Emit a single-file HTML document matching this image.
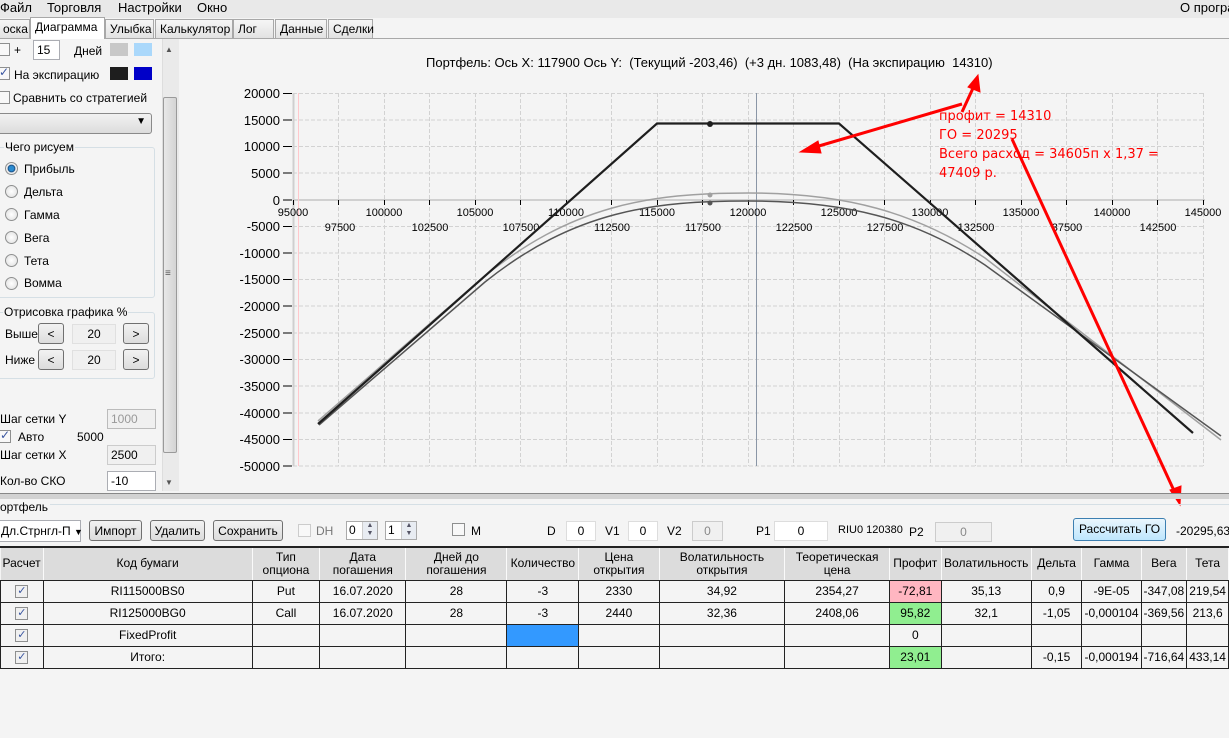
<!DOCTYPE html>
<html><head><meta charset="utf-8">
<style>
*{box-sizing:border-box;margin:0;padding:0}
body{width:1229px;height:738px;overflow:hidden;background:#f4f4f4;font-family:"Liberation Sans","DejaVu Sans",sans-serif;font-size:12px;color:#000;position:relative}
.a{position:absolute;white-space:nowrap}
.menu{left:0;top:0;width:1229px;height:18px;background:#e9e9e9;font-size:13px}
.tab{top:19px;height:19px;border:1px solid #a8a8a8;border-bottom:none;background:linear-gradient(#f6f6f6,#e2e2e2);font-size:12px;padding:2px 4px}
.tab.sel{background:#fff;top:17px;height:22px}
.cb{width:13px;height:13px;border:1px solid #8e8f8f;background:#f8f8f8}
.cbk::after{content:"✓";position:absolute;left:1px;top:-3px;font-size:12px;color:#3a56a0}
.inp{border:1px solid #abadb3;background:#fff;height:20px;padding:2px 3px}
.dis{background:#f0f0f0;color:#888;border-color:#ccc}
.btn{border:1px solid #707070;border-radius:3px;background:linear-gradient(#f2f2f2,#dcdcdc);text-align:center;height:21px;padding-top:3px}
.rad{width:13px;height:13px;border-radius:50%;border:1px solid #8e8f8f;background:radial-gradient(#fff,#ddd)}
.grp{border:1px solid #d5dfe5;border-radius:3px}
table{border-collapse:collapse;position:absolute;left:0;top:548px;font-size:12px;table-layout:fixed}
td{border:1px solid #222;border-top:1px solid #111;text-align:center;height:22px;background:#f4f4f4;padding:0 2px;overflow:hidden;white-space:nowrap}
th{font-weight:normal;background:#dcdcdc;border-right:1px solid #fafafa;border-bottom:1px solid #222;height:32px;line-height:13px;padding:0 2px}
.tk{display:inline-block;width:13px;height:13px;border:1px solid #8e8f8f;background:#f0f0f0;color:#3a56a0;font-size:11px;line-height:11px;vertical-align:middle}
</style></head><body>
<div class="a menu"><span class="a" style="left:0;top:0">Файл</span><span class="a" style="left:47px;top:0">Торговля</span><span class="a" style="left:118px;top:0">Настройки</span><span class="a" style="left:197px;top:0">Окно</span><span class="a" style="left:1180px;top:0">О програ</span></div>
<div class="a" style="left:0;top:38px;width:1229px;height:1px;background:#a8a8a8"></div>
<div class="a tab" style="left:-2px;width:32px">оска</div>
<div class="a tab" style="left:105px;width:49px">Улыбка</div>
<div class="a tab" style="left:155px;width:78px">Калькулятор</div>
<div class="a tab" style="left:233px;width:41px">Лог</div>
<div class="a tab" style="left:275px;width:52px">Данные</div>
<div class="a tab" style="left:328px;width:45px">Сделки</div>
<div class="a tab sel" style="left:30px;width:75px">Диаграмма</div>

<div class="a cb" style="left:-3px;top:43px"></div>
<div class="a" style="left:14px;top:43px">+</div>
<div class="a inp" style="left:33px;top:40px;width:27px;background:#fff">15</div>
<div class="a" style="left:74px;top:44px">Дней</div>
<div class="a" style="left:110px;top:43px;width:18px;height:13px;background:#c8c8c8"></div>
<div class="a" style="left:134px;top:43px;width:18px;height:13px;background:#aad8fb"></div>
<div class="a cb cbk" style="left:-3px;top:67px"></div>
<div class="a" style="left:14px;top:68px">На экспирацию</div>
<div class="a" style="left:110px;top:67px;width:18px;height:13px;background:#1e1e1e"></div>
<div class="a" style="left:134px;top:67px;width:18px;height:13px;background:#0000c8"></div>
<div class="a cb" style="left:-3px;top:91px"></div>
<div class="a" style="left:13px;top:91px">Сравнить со стратегией</div>
<div class="a" style="left:-3px;top:113px;width:155px;height:21px;border:1px solid #8a8a8a;border-radius:3px;background:linear-gradient(#f2f2f2,#dcdcdc)"><span class="a" style="right:5px;top:2px;font-size:10px">▼</span></div>
<div class="a grp" style="left:-3px;top:147px;width:158px;height:151px"></div>
<div class="a" style="left:4px;top:140px;background:#f4f4f4;padding:0 1px">Чего рисуем</div>
<div class="a rad" style="left:5px;top:162px;background:radial-gradient(#2a8bd0 30%,#184a80 45%,#eee 55%)"></div><div class="a" style="left:24px;top:162px">Прибыль</div>
<div class="a rad" style="left:5px;top:185px"></div><div class="a" style="left:24px;top:185px">Дельта</div>
<div class="a rad" style="left:5px;top:208px"></div><div class="a" style="left:24px;top:208px">Гамма</div>
<div class="a rad" style="left:5px;top:231px"></div><div class="a" style="left:24px;top:231px">Вега</div>
<div class="a rad" style="left:5px;top:254px"></div><div class="a" style="left:24px;top:254px">Тета</div>
<div class="a rad" style="left:5px;top:277px"></div><div class="a" style="left:24px;top:276px">Вомма</div>
<div class="a grp" style="left:-3px;top:312px;width:158px;height:67px"></div>
<div class="a" style="left:3px;top:305px;background:#f4f4f4;padding:0 1px">Отрисовка графика %</div>
<div class="a" style="left:5px;top:327px">Выше</div>
<div class="a btn" style="left:38px;top:323px;width:26px">&lt;</div>
<div class="a inp dis" style="left:72px;top:324px;width:44px;text-align:center;color:#000;background:#f0f0f0;border-color:#e0e0e0">20</div>
<div class="a btn" style="left:123px;top:323px;width:26px">&gt;</div>
<div class="a" style="left:5px;top:353px">Ниже</div>
<div class="a btn" style="left:38px;top:349px;width:26px">&lt;</div>
<div class="a inp dis" style="left:72px;top:350px;width:44px;text-align:center;color:#000;background:#f0f0f0;border-color:#e0e0e0">20</div>
<div class="a btn" style="left:123px;top:349px;width:26px">&gt;</div>
<div class="a" style="left:0;top:412px">Шаг сетки Y</div>
<div class="a inp dis" style="left:107px;top:409px;width:49px;color:#999;border-color:#bbb">1000</div>
<div class="a cb cbk" style="left:-2px;top:430px"></div>
<div class="a" style="left:18px;top:430px">Авто</div>
<div class="a" style="left:77px;top:430px">5000</div>
<div class="a" style="left:0;top:448px">Шаг сетки X</div>
<div class="a inp dis" style="left:107px;top:445px;width:49px;color:#000;border-color:#ccc">2500</div>
<div class="a" style="left:0;top:474px">Кол-во СКО</div>
<div class="a inp" style="left:107px;top:471px;width:49px">-10</div>
<div class="a" style="left:162px;top:39px;width:17px;height:452px;background:#eaeaea;border-left:1px solid #ddd"></div>
<div class="a" style="left:165px;top:45px;font-size:8px;color:#555">▲</div>
<div class="a" style="left:165px;top:478px;font-size:8px;color:#555">▼</div>
<div class="a" style="left:163px;top:97px;width:14px;height:356px;border:1px solid #9a9a9a;border-radius:2px;background:linear-gradient(90deg,#e8e8e8,#d4d4d4)"></div>
<div class="a" style="left:165px;top:268px;font-size:10px;color:#555">≡</div>

<div class="a" style="left:426px;top:55px;font-size:13px">Портфель:&nbsp;Ось&nbsp;X:&nbsp;117900&nbsp;Ось&nbsp;Y:&nbsp;&nbsp;(Текущий&nbsp;-203,46)&nbsp;&nbsp;(+3&nbsp;дн.&nbsp;1083,48)&nbsp;&nbsp;(На&nbsp;экспирацию&nbsp;&nbsp;14310)</div>

<svg class="a" style="left:0;top:0" width="1229" height="738" viewBox="0 0 1229 738">
<g stroke="#d2d2d2" stroke-dasharray="4,2" stroke-width="1" fill="none">
<path d="M293 93.5H1205M293 120H1205M293 146.5H1205M293 173H1205M293 226.5H1205M293 253H1205M293 279.5H1205M293 306H1205M293 333H1205M293 359.5H1205M293 386H1205M293 413H1205M293 439.5H1205M293 466H1205"/>
<path d="M338.5 93V466M384.5 93V466M429.5 93V466M475.5 93V466M520.5 93V466M566.5 93V466M611.5 93V466M657.5 93V466M702.5 93V466M748.5 93V466M793.5 93V466M839.5 93V466M884.5 93V466M930.5 93V466M975.5 93V466M1021.5 93V466M1066.5 93V466M1112.5 93V466M1157.5 93V466M1203.5 93V466"/>
</g>
<path d="M293 200H1205" stroke="#d0d0d0" stroke-width="2"/>
<path d="M293.5 93V466" stroke="#cfcfcf" stroke-width="2"/>
<path d="M298.5 93V466" stroke="#ffc8cc" stroke-width="1"/>
<path d="M756.5 93V466" stroke="#8a96a6" stroke-width="1"/>
<g stroke="#000" stroke-width="1">
<path d="M283 93.5H292M283 120H292M283 146.5H292M283 173H292M283 200H292M283 226.5H292M283 253H292M283 279.5H292M283 306H292M283 333H292M283 359.5H292M283 386H292M283 413H292M283 439.5H292M283 466H292"/>
<path d="M293.5 200V205M338.5 200V205M384.5 200V205M429.5 200V205M475.5 200V205M520.5 200V205M566.5 200V205M611.5 200V205M657.5 200V205M702.5 200V205M748.5 200V205M793.5 200V205M839.5 200V205M884.5 200V205M930.5 200V205M975.5 200V205M1021.5 200V205M1066.5 200V205M1112.5 200V205M1157.5 200V205M1203.5 200V205"/>
</g>
<g font-family="Liberation Sans, sans-serif" font-size="13" text-anchor="end" fill="#000">
<text x="280" y="98">20000</text><text x="280" y="125">15000</text><text x="280" y="151">10000</text><text x="280" y="178">5000</text><text x="280" y="205">0</text><text x="280" y="231">-5000</text><text x="280" y="258">-10000</text><text x="280" y="284">-15000</text><text x="280" y="311">-20000</text><text x="280" y="338">-25000</text><text x="280" y="364">-30000</text><text x="280" y="391">-35000</text><text x="280" y="418">-40000</text><text x="280" y="444">-45000</text><text x="280" y="471">-50000</text>
</g>
<g font-family="Liberation Sans, sans-serif" font-size="11" text-anchor="middle" fill="#000">
<text x="293" y="216">95000</text><text x="384" y="216">100000</text><text x="475" y="216">105000</text><text x="566" y="216">110000</text><text x="657" y="216">115000</text><text x="748" y="216">120000</text><text x="839" y="216">125000</text><text x="930" y="216">130000</text><text x="1021" y="216">135000</text><text x="1112" y="216">140000</text><text x="1203" y="216">145000</text>
<text x="340" y="231">97500</text><text x="430" y="231">102500</text><text x="521" y="231">107500</text><text x="612" y="231">112500</text><text x="703" y="231">117500</text><text x="794" y="231">122500</text><text x="885" y="231">127500</text><text x="976" y="231">132500</text><text x="1067" y="231">37500</text><text x="1158" y="231">142500</text>
</g>
<path d="M318 421 L480 280 C570 205 650 193 748 193 C845 193 915 212 985 258 L1221 440" stroke="#a0a0a0" stroke-width="1.5" fill="none"/>
<path d="M319 425 L485 282 C575 210 655 201 748 201 C845 201 915 218 985 265 L1221 436" stroke="#555" stroke-width="1.5" fill="none"/>
<polyline points="318,424 657,123.5 839,123.5 1193,433" stroke="#1e1e1e" stroke-width="2.2" fill="none"/>
<circle cx="710" cy="124" r="3" fill="#1e1e1e"/>
<circle cx="710" cy="195" r="2.5" fill="#a0a0a0"/>
<circle cx="710" cy="203" r="2.5" fill="#555"/>
<g stroke="#ff0000" stroke-width="3" fill="#ff0000">
<path d="M962 104 L812 148"/><path d="M800 152 L818 141 L821 153Z" stroke-width="1"/>
<path d="M962 112 L974 86"/><path d="M978 75 L980 92 L968 87Z" stroke-width="1"/>
<path d="M1012 139 L1176 495"/><path d="M1180 505 L1170 490 L1181 486Z" stroke-width="1"/>
</g>
<g font-family="DejaVu Sans, sans-serif" font-size="13" fill="#ff0000">
<text x="939" y="120">профит = 14310</text><text x="939" y="139">ГО = 20295</text><text x="939" y="158">Всего расход = 34605п х 1,37 =</text><text x="939" y="177">47409 р.</text>
</g>
</svg>

<div class="a" style="left:0;top:493px;width:1229px;height:1px;background:#888"></div>
<div class="a" style="left:0;top:494px;width:1229px;height:5px;background:#d2d2d2"></div>
<div class="a" style="left:0;top:504px;width:1229px;height:1px;background:#d5dfe5"></div>
<div class="a" style="left:0;top:500px;background:#f4f4f4;padding-right:2px;font-size:12px">ортфель</div>

<div class="a" style="left:-2px;top:520px;width:83px;height:22px;border:1px solid #abadb3;background:#fff;padding:3px 2px">Дл.Стрнгл-П <span style="font-size:9px">▼</span></div>
<div class="a btn" style="left:89px;top:520px;width:53px">Импорт</div>
<div class="a btn" style="left:150px;top:520px;width:55px">Удалить</div>
<div class="a btn" style="left:213px;top:520px;width:70px">Сохранить</div>
<div class="a cb" style="left:298px;top:524px;border-color:#ccc"></div>
<div class="a" style="left:316px;top:524px;color:#777">DH</div>
<div class="a inp" style="left:346px;top:521px;width:32px;height:19px;padding:1px 2px;border-color:#aaa">0</div>
<div class="a" style="left:362px;top:522px;width:15px;height:17px;background:#e8ecf2;border-left:1px solid #ccc;font-size:7px;color:#556;text-align:center;line-height:8px">▲<br>▼</div>
<div class="a inp" style="left:385px;top:521px;width:32px;height:19px;padding:1px 2px;border-color:#aaa">1</div>
<div class="a" style="left:401px;top:522px;width:15px;height:17px;background:#e8ecf2;border-left:1px solid #ccc;font-size:7px;color:#556;text-align:center;line-height:8px">▲<br>▼</div>
<div class="a cb" style="left:452px;top:523px"></div>
<div class="a" style="left:471px;top:524px">M</div>
<div class="a" style="left:547px;top:524px">D</div>
<div class="a inp" style="left:566px;top:521px;width:30px;text-align:center;border-color:#ddd">0</div>
<div class="a" style="left:605px;top:524px">V1</div>
<div class="a inp" style="left:628px;top:521px;width:30px;text-align:center;border-color:#ddd">0</div>
<div class="a" style="left:667px;top:524px">V2</div>
<div class="a inp dis" style="left:692px;top:521px;width:31px;text-align:center">0</div>
<div class="a" style="left:756px;top:524px">P1</div>
<div class="a inp" style="left:774px;top:521px;width:54px;text-align:center;border-color:#ddd">0</div>
<div class="a" style="left:838px;top:524px;font-size:11px">RIU0 120380</div>
<div class="a" style="left:909px;top:525px">P2</div>
<div class="a inp dis" style="left:935px;top:522px;width:57px;text-align:center">0</div>
<div class="a btn" style="left:1073px;top:518px;width:93px;height:23px;border-color:#3c7fb1;background:linear-gradient(#eaf6fd,#bee6fd)">Рассчитать ГО</div>
<div class="a" style="left:1176px;top:524px">-20295,63 г</div>
<div class="a" style="left:0;top:546px;width:1229px;height:2px;background:#222"></div>

<table>
<colgroup><col style="width:42px"><col style="width:213px"><col style="width:68px"><col style="width:87px"><col style="width:102px"><col style="width:72px"><col style="width:81px"><col style="width:127px"><col style="width:105px"><col style="width:52px"><col style="width:90px"><col style="width:51px"><col style="width:56px"><col style="width:43px"><col style="width:40px"></colgroup>
<tr><th>Расчет</th><th>Код бумаги</th><th>Тип<br>опциона</th><th>Дата<br>погашения</th><th>Дней до<br>погашения</th><th>Количество</th><th>Цена<br>открытия</th><th>Волатильность<br>открытия</th><th>Теоретическая<br>цена</th><th>Профит</th><th>Волатильность</th><th>Дельта</th><th>Гамма</th><th>Вега</th><th>Тета</th></tr>
<tr><td><span class="tk">✓</span></td><td>RI115000BS0</td><td>Put</td><td>16.07.2020</td><td>28</td><td>-3</td><td>2330</td><td>34,92</td><td>2354,27</td><td style="background:#ffb6c1">-72,81</td><td>35,13</td><td>0,9</td><td>-9E-05</td><td>-347,08</td><td>219,54</td></tr>
<tr><td><span class="tk">✓</span></td><td>RI125000BG0</td><td>Call</td><td>16.07.2020</td><td>28</td><td>-3</td><td>2440</td><td>32,36</td><td>2408,06</td><td style="background:#90ee90">95,82</td><td>32,1</td><td>-1,05</td><td>-0,000104</td><td>-369,56</td><td>213,6</td></tr>
<tr><td><span class="tk">✓</span></td><td>FixedProfit</td><td></td><td></td><td></td><td style="background:#3399ff"></td><td></td><td></td><td></td><td>0</td><td></td><td></td><td></td><td></td><td></td></tr>
<tr><td><span class="tk">✓</span></td><td>Итого:</td><td></td><td></td><td></td><td></td><td></td><td></td><td></td><td style="background:#90ee90">23,01</td><td></td><td>-0,15</td><td>-0,000194</td><td>-716,64</td><td>433,14</td></tr>
</table>
</body></html>
